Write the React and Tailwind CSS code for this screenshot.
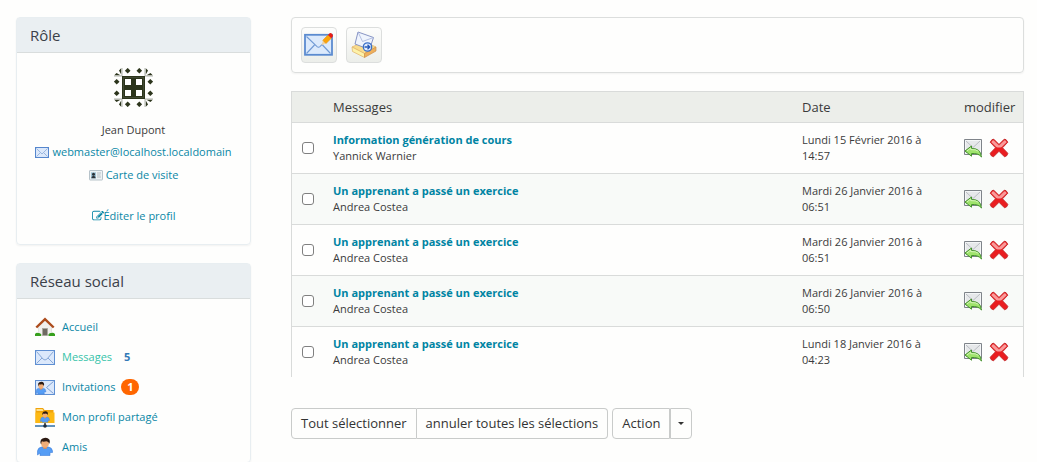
import React from "react";

function Avatar() {
  const corner = (
    <g>
      <path d="M7.200 .3 5 2.500 7.200 6.500Z" />
      <path d="M.3 7.200 2.500 5 6.500 7.200Z" />
      <path d="M8 0V8H0" fill="none" stroke="#8d9486" strokeWidth=".7" />
    </g>
  );
  const dots = [
    [13.7, 2.7], [25.3, 2.7], [13.7, 36.3], [25.3, 36.3],
    [2.7, 13.7], [2.7, 25.3], [36.3, 13.7], [36.3, 25.3],
  ];
  return (
    <svg viewBox="0 0 39 39" className="h-[39px] w-[39px]" fill="#2c351c" role="img" aria-label="Jean Dupont">
      {corner}
      <g transform="translate(39 0) scale(-1 1)">{corner}</g>
      <g transform="translate(0 39) scale(1 -1)">{corner}</g>
      <g transform="translate(39 39) scale(-1 -1)">{corner}</g>
      <rect x="8" y="8" width="23" height="23" />
      <path d="M9.500 9.500H29.500V29.500H9.500Z" fill="none" stroke="#59614c" strokeWidth=".5" />
      {[11, 22].map((x) => [11, 22].map((y) => <rect key={x + "-" + y} x={x} y={y} width="6" height="6" fill="#fff" />))}
      {dots.map(([x, y]) => (
        <path key={x + "," + y} d={`M${x} ${y - 2.8}l2.800 2.800-2.800 2.800-2.800-2.800z`} />
      ))}
    </svg>
  );
}

function Envelope({ className }) {
  return (
    <svg viewBox="0 0 20 15" className={className} aria-hidden="true">
      <rect x=".5" y=".5" width="19" height="14" fill="#dbe8fb" stroke="#5f8fd2" />
      <path d="M1.500 1.500 8.200 9.200Q10 10.800 11.800 9.200L18.500 1.500M1.500 13.500 7 8M18.500 13.500 13 8" fill="none" stroke="#7c9fd3" strokeWidth=".9" />
    </svg>
  );
}

function SmallEnvelope() {
  return (
    <svg viewBox="0 0 14 11" className="h-[11px] w-[14px]" aria-hidden="true">
      <rect x=".5" y=".5" width="13" height="10" fill="#dbe8fb" stroke="#5586cd" />
      <path d="M1.500 1.500 7 7 12.500 1.500M1.500 9.500 5 6M12.500 9.500 9 6" fill="none" stroke="#8aa9d8" strokeWidth=".8" />
    </svg>
  );
}

function PencilSquare() {
  return (
    <svg viewBox="0 0 1792 1792" className="h-3 w-3" fill="currentColor" aria-hidden="true">
      <path d="M888 1184l116-116-152-152-116 116v56h96v96h56zm440-720q-16-16-33 1l-350 350q-17 17-1 33t33-1l350-350q17-17 1-33zm80 594v190q0 119-84.500 203.500t-203.500 84.500h-832q-119 0-203.500-84.500t-84.500-203.500v-832q0-119 84.500-203.500t203.500-84.500h832q63 0 117 25 15 7 18 23 3 17-9 29l-49 49q-14 14-32 8-23-6-45-6h-832q-66 0-113 47t-47 113v832q0 66 47 113t113 47h832q66 0 113-47t47-113v-126q0-13 9-22l64-64q15-15 35-7t20 29zm-96-738l288 288-672 672h-288v-288zm444 132l-92 92-288-288 92-92q28-28 68-28t68 28l152 152q28 28 28 68t-28 68z" />
    </svg>
  );
}

function PersonShape() {
  return (
    <g>
      <path d="M2.500 18V14Q3 10.500 6.500 10H13.500Q17 10.500 17.500 14V15.500H15V18.500H5V16Z" fill="#559df5" stroke="#3f7fda" strokeWidth=".6" />
      <path d="M8 9h4v2.200q-2 1.600-4 0z" fill="#d98c56" />
      <ellipse cx="10" cy="6.300" rx="4" ry="4.400" fill="#f0ad78" />
      <path d="M5.600 6.500Q4.800 2.600 7.500 1.500Q12-.2 14.300 2.400Q15.300 4.200 14.400 6.800Q13.500 4.500 11.500 4.300Q8 5 7 4.300Q6.200 5 6.300 7Z" fill="#2c1a12" />
    </g>
  );
}

function Home() {
  return (
    <svg viewBox="0 0 20 20" className="h-5 w-5" aria-hidden="true">
      <path d="M3.500 9.500 10 3.500 16.500 9.500V18H3.500Z" fill="#f1f0ee" stroke="#d2d0cc" strokeWidth=".5" />
      <rect x="7.500" y="11.500" width="5" height="7" fill="#6e6a62" stroke="#a9a59d" strokeWidth=".7" />
      <path d="M1.300 10.500 10 2.200 18.700 10.500" fill="none" stroke="#ad4c1c" strokeWidth="2.400" />
      <path d="M0 19v-2q1.500-1.600 3-1 1.500-.5 3.200 1.200V19zM13.500 19v-1.700q1.500-1.500 2.700-1.200 2-.8 3.800 1V19z" fill="#37a01d" />
    </svg>
  );
}

function Invitation() {
  return (
    <svg viewBox="0 0 20 15" className="h-[15px] w-5" aria-hidden="true">
      <rect x=".5" y=".5" width="19" height="14" fill="#dbe8fb" stroke="#5f8fd2" />
      <path d="M18.500 1.500 11.500 7.500 18.500 13.500" fill="none" stroke="#7c9fd3" />
      <g transform="translate(-.5 1.300) scale(.65 .69)"><PersonShape /></g>
    </svg>
  );
}

function SharedFolder() {
  return (
    <svg viewBox="0 0 20 21" className="h-[21px] w-5" aria-hidden="true">
      <path d="M.5 16V1H8L9.500 3H18.500V16Z" fill="#f0a30a" />
      <path d="M1.500 4V2H7.500L8.500 4Z" fill="#ffe08a" />
      <path d="M.5 5.500H19.500V16H.5Z" fill="#fdb913" />
      <g transform="translate(4 3.700) scale(.6 .63)"><PersonShape /></g>
      <path d="M0 19H20" stroke="#3c78ad" strokeWidth="1.600" />
      <path d="M10 16V19" stroke="#333" strokeWidth="1.500" />
      <circle cx="10" cy="19" r="1.800" fill="#1e2d3d" />
    </svg>
  );
}

function Friend() {
  return (
    <svg viewBox="0 0 20 20" className="h-5 w-5" aria-hidden="true"><PersonShape /></svg>
  );
}

function Card() {
  return (
    <svg viewBox="0 0 14 11" className="h-[11px] w-[14px]" aria-hidden="true">
      <rect x=".5" y=".5" width="13" height="9.500" rx=".5" fill="#edf2f5" stroke="#b7c3ca" />
      <rect x="2" y="2.300" width="5" height="6" fill="#9fc3d6" />
      <circle cx="4.500" cy="4.200" r="1.500" fill="#2c3239" />
      <path d="M2.300 8.300Q2.500 5.800 4.500 5.800T6.700 8.300Z" fill="#2c3239" />
      <path d="M8 3h4M8 5h3.500M8 7h4" stroke="#a9b1b6" strokeWidth=".8" />
    </svg>
  );
}

function Compose() {
  return (
    <svg viewBox="0 0 30 28" className="h-7 w-[30px]" aria-hidden="true">
      <rect x="1" y="3.800" width="27" height="20" fill="#dceafc" stroke="#5b8bd0" strokeWidth="1.800" />
      <path d="M2.500 5.500 12 14.500Q14.500 18 17 14.500L26.500 5.500M2.500 22.500 10.500 14M26.500 22.500 18.500 14" fill="none" stroke="#6f99d4" strokeWidth="1.100" />
      <path d="M17.500 14.200 19 9.200 22 12.300Z" fill="#f3d3a0" />
      <path d="M18.800 9.300 24 4 27.300 7.300 22 12.600Z" fill="#fba40a" stroke="#e38b00" strokeWidth=".5" />
      <path d="M24 4 25.300 2.500Q26.500 1.500 28 2.800T28.700 5.800L27.300 7.300Z" fill="#e81c14" />
    </svg>
  );
}

function Outbox() {
  return (
    <svg viewBox="0 0 28 30" className="h-[30px] w-7" aria-hidden="true">
      <path d="M2 17 14 11.500 26 17 14.500 23.500Z" fill="#f9dc8d" stroke="#dfb268" strokeWidth=".7" />
      <path d="M2 17 14.500 23.500V27.500L2.500 21.500Z" fill="#fdf2a8" stroke="#dfb268" strokeWidth=".7" />
      <path d="M14.500 23.500 26 17V21L14.500 27.500Z" fill="#eeb05c" stroke="#cf8f48" strokeWidth=".7" />
      <path d="M8 2 23.500 7.500 19.500 19.500 5 14Z" fill="#eff4fd" stroke="#7c89bd" strokeWidth=".9" />
      <path d="M8 2 12.500 11.500 23.500 7.500" fill="none" stroke="#a5b2da" strokeWidth=".8" />
      <circle cx="17.500" cy="17" r="4.200" fill="#e2edff" stroke="#3a70c8" strokeWidth="1.300" />
      <path d="M14.500 17H19.500M17.500 14.800 19.800 17 17.500 19.200" fill="none" stroke="#2659b8" strokeWidth="1.300" />
    </svg>
  );
}

function Reply() {
  return (
    <svg viewBox="0 0 20 20" className="h-5 w-5" aria-hidden="true">
      <path d="M1.500 1.500H18.500V16.500H1.500Z" fill="#e6e8ea" stroke="#7f848a" strokeWidth="1" />
      <path d="M2.500 2.500H17.500V15.500H2.500Z" fill="none" stroke="#f8f9fa" strokeWidth=".8" />
      <path d="M3 3 10 9.500 17 3M3 15 8 9" fill="none" stroke="#b4b8bd" strokeWidth=".9" />
      <path d="M2 13 8.500 8V10.500Q17.500 10 18.500 19Q15.500 15 8.500 15.500V18.200Z" fill="#9fe36c" stroke="#43902c" strokeWidth="1" />
      <path d="M4 12.900 7.700 10V11.600Q13 11.200 15.500 13.300" fill="none" stroke="#dbf8be" strokeWidth=".9" />
    </svg>
  );
}

function Delete() {
  return (
    <svg viewBox="0 0 20 20" className="h-5 w-5" aria-hidden="true">
      <path
        d="M4.800 1.200 10 6.400 15.200 1.200Q17 .6 18.800 4.200L13.500 9.800 18.800 15.300Q18.400 18.300 15.500 18.800L10 13.300 4.500 18.800Q1.600 18.300 1.200 15.300L6.500 9.800 1.200 4.200Q3 .6 4.800 1.200Z"
        fill="#ea1d20" stroke="#c2282a" strokeWidth=".9"
      />
      <path d="M4.500 2.200 10 7.600 15.500 2.200Q17 2.200 17.700 4.200L12.800 9Q10 10 7.200 9L2.300 4.200Q3 2.200 4.500 2.200Z" fill="#f99a9a" />
    </svg>
  );
}

const menu = [
  { label: "Accueil", icon: <Home /> },
  { label: "Messages", icon: <Envelope className="h-[15px] w-5" />, active: true, count: 5 },
  { label: "Invitations", icon: <Invitation />, badge: 1 },
  { label: "Mon profil partagé", icon: <SharedFolder /> },
  { label: "Amis", icon: <Friend /> },
];

const messages = [
  { title: "Information génération de cours", from: "Yannick Warnier", date: "Lundi 15 Février 2016 à 14:57" },
  { title: "Un apprenant a passé un exercice", from: "Andrea Costea", date: "Mardi 26 Janvier 2016 à 06:51" },
  { title: "Un apprenant a passé un exercice", from: "Andrea Costea", date: "Mardi 26 Janvier 2016 à 06:51" },
  { title: "Un apprenant a passé un exercice", from: "Andrea Costea", date: "Mardi 26 Janvier 2016 à 06:50" },
  { title: "Un apprenant a passé un exercice", from: "Andrea Costea", date: "Lundi 18 Janvier 2016 à 04:23" },
];

function Panel({ title, children }) {
  return (
    <section className="rounded border border-[#e8eef1] shadow-xs">
      <h2 className="border-b border-[#d9dddd] bg-[#eaeff2] px-[13px] py-2 text-[15px] leading-[18px] text-[#3a4049]">{title}</h2>
      {children}
    </section>
  );
}

export default function App() {
  return (
    <div className="flex items-start gap-10 bg-[#fefefd] pt-[17px] pr-[13px] pl-4 font-['Open_Sans','Noto_Sans',sans-serif] text-[11px] leading-4 text-[#3b3b3b]">
      <aside className="flex w-[235px] shrink-0 flex-col gap-[18px]">
        <Panel title="Rôle">
          <div className="flex flex-col items-center pt-[15px] pb-5">
            <Avatar />
            <p className="mt-[15px]">Jean Dupont</p>
            <a href="#mail" className="mt-[6px] flex items-center gap-[3px] text-[#0a87a6]">
              <SmallEnvelope />webmaster@localhost.localdomain
            </a>
            <a href="#carte" className="mt-[7px] flex items-center gap-[3px] text-[#0a87a6]">
              <Card />Carte de visite
            </a>
            <a href="#profil" className="mt-[25px] flex items-center text-[#0a87a6]">
              <PencilSquare />Éditer le profil
            </a>
          </div>
        </Panel>
        <Panel title="Réseau social">
          <ul className="pt-[13px] pl-[18px]">
            {menu.map((item) => (
              <li key={item.label} className="flex h-[30px] items-center">
                <a href="#menu" className={"flex items-center gap-[7px] " + (item.active ? "text-[#36c3a9]" : "text-[#0a87a6]")}>
                  {item.icon}
                  {item.label}
                </a>
                {item.count && <span className="ml-3 font-bold text-[#337ab7]">{item.count}</span>}
                {item.badge && (
                  <span className="ml-[6px] w-[18px] rounded-full bg-[#ff6600] text-center font-bold text-white">{item.badge}</span>
                )}
              </li>
            ))}
          </ul>
        </Panel>
      </aside>

      <main className="min-w-0 flex-1">
        <div className="flex gap-[9px] rounded border border-[#dcdedd] p-[9px] shadow-xs">
          <button type="button" aria-label="Composer un message" className="flex h-9 w-9 items-center justify-center rounded border border-[#dcdedd] bg-linear-to-b from-[#fdfdfc] to-[#eceeea]">
            <Compose />
          </button>
          <button type="button" aria-label="Messages envoyés" className="flex h-9 w-9 items-center justify-center rounded border border-[#dcdedd] bg-linear-to-b from-[#fdfdfc] to-[#eceeea]">
            <Outbox />
          </button>
        </div>

        <table className="mt-[18px] w-full table-fixed border-separate border-spacing-0 border-x border-[#d9dbda] text-left">
          <thead className="bg-[#eceeea] text-[13px] leading-4">
            <tr>
              <th className="w-[31px] border-t border-[#d9dbda]" aria-label="Sélection"></th>
              <th className="border-t border-[#d9dbda] px-[10px] py-[7px] font-normal">Messages</th>
              <th className="w-[162px] border-t border-[#d9dbda] px-[10px] font-normal">Date</th>
              <th className="w-[69px] border-t border-[#d9dbda] pl-[10px] font-normal">modifier</th>
            </tr>
          </thead>
          <tbody>
            {messages.map((m, i) => (
              <tr key={i} className="even:bg-[#f8faf8]">
                <td className="border-t border-[#d9dbda] pl-[10px]">
                  <input type="checkbox" aria-label={"Sélectionner " + m.title} className="block h-3 w-3 appearance-none rounded-[3px] border border-[#808080] bg-white checked:bg-[#0a87a6]" />
                </td>
                <td className="border-t border-[#d9dbda] px-[10px] py-[9px]">
                  <a href="#message" className="block font-bold text-[#0084a3]">{m.title}</a>
                  {m.from}
                </td>
                <td className="border-t border-[#d9dbda] px-[10px]">{m.date}</td>
                <td className="border-t border-[#d9dbda] pl-[9px]">
                  <div className="flex gap-[6px]">
                    <button type="button" aria-label="Répondre"><Reply /></button>
                    <button type="button" aria-label="Supprimer"><Delete /></button>
                  </div>
                </td>
              </tr>
            ))}
          </tbody>
        </table>

        <div className="mt-[31px] flex gap-1 text-[13px] leading-[17px] text-[#333]">
          <div className="flex">
            <button type="button" className="rounded-l border border-[#c9cbca] px-[9px] py-[6px]">Tout sélectionner</button>
            <button type="button" className="rounded-r border border-l-0 border-[#c9cbca] px-[9px] py-[6px]">annuler toutes les sélections</button>
          </div>
          <div className="flex">
            <button type="button" className="rounded-l border border-[#c9cbca] px-[9px] py-[6px]">Action</button>
            <button type="button" aria-label="Ouvrir le menu" className="flex items-center rounded-r border border-[#c9cbca] px-[7px]">
              <svg viewBox="0 0 6 3" className="h-[3px] w-[6px]" fill="#333" aria-hidden="true"><path d="M0 0h6L3 3z" /></svg>
            </button>
          </div>
        </div>
      </main>
    </div>
  );
}
